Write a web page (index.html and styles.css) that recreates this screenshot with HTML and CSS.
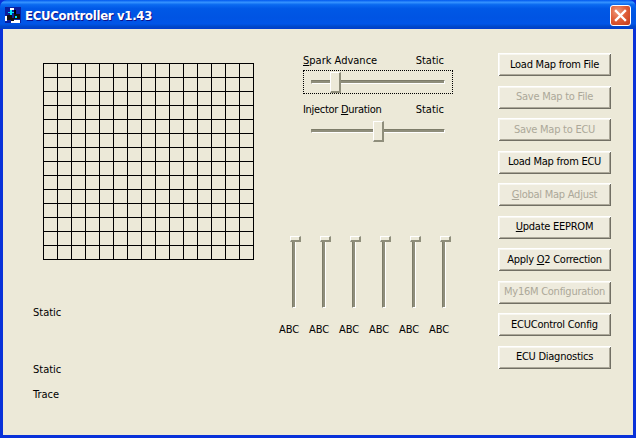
FILE: index.html
```html
<!DOCTYPE html>
<html lang="en">
<head>
<meta charset="utf-8">
<title>ECUController v1.43</title>
<link rel="stylesheet" href="styles.css">
</head>
<body>
<div class="window">
  <header class="titlebar">
    <svg class="app-icon" width="16" height="16" viewBox="0 0 16 16" shape-rendering="crispEdges">
      <rect width="16" height="16" fill="#0a1f9f"/>
      <rect x="5" y="1" width="4" height="2" fill="#ffffff"/>
      <rect x="5" y="3" width="2" height="6" fill="#00e5ff"/>
      <rect x="3" y="5" width="6" height="1" fill="#00e5ff"/>
      <rect x="9" y="3" width="2" height="4" fill="#000000"/>
      <rect x="2" y="8" width="5" height="5" fill="#111111"/>
      <rect x="0" y="9" width="2" height="5" fill="#ffffff"/>
      <rect x="9" y="7" width="6" height="5" fill="#111111"/>
      <rect x="10" y="9" width="2" height="2" fill="#00e5ff"/>
      <rect x="6" y="13" width="9" height="3" fill="#ffffff"/>
      <rect x="6" y="11" width="3" height="3" fill="#111111"/>
    </svg>
    <span class="title-text">ECUController v1.43</span>
    <button class="close" aria-label="Close">
      <svg width="13" height="13" viewBox="0 0 13 13"><path d="M2 2 L11 11 M11 2 L2 11" stroke="#fff" stroke-width="2.4" stroke-linecap="square"/></svg>
    </button>
  </header>
  <main class="client">
    <section class="left">
      <div class="map-grid"></div>
      <div class="lbl lbl-a">Static</div>
      <div class="lbl lbl-b">Static</div>
      <div class="lbl lbl-c">Trace</div>
    </section>
    <section class="middle">
      <div class="slider-head"><span><u>S</u>park Advance</span><span>Static</span></div>
      <div class="hslider focused"><div class="track"></div><div class="thumb thumb-spark"></div></div>
      <div class="slider-head head-two"><span class="tight">Injector <u>D</u>uration</span><span>Static</span></div>
      <div class="hslider"><div class="track"></div><div class="thumb thumb-inj"></div></div>
      <div class="vsliders">
        <div class="vcol"><div class="vtrack"><div class="vthumb"></div></div><span>ABC</span></div>
        <div class="vcol"><div class="vtrack"><div class="vthumb"></div></div><span>ABC</span></div>
        <div class="vcol"><div class="vtrack"><div class="vthumb"></div></div><span>ABC</span></div>
        <div class="vcol"><div class="vtrack"><div class="vthumb"></div></div><span>ABC</span></div>
        <div class="vcol"><div class="vtrack"><div class="vthumb"></div></div><span>ABC</span></div>
        <div class="vcol"><div class="vtrack"><div class="vthumb"></div></div><span>ABC</span></div>
      </div>
    </section>
    <section class="buttons">
      <button class="btn">Load Map from File</button>
      <button class="btn" disabled>Save Map to File</button>
      <button class="btn" disabled>Save Map to ECU</button>
      <button class="btn">Load Map from ECU</button>
      <button class="btn" disabled><u>G</u>lobal Map Adjust</button>
      <button class="btn"><u>U</u>pdate EEPROM</button>
      <button class="btn">Apply <u>O</u>2 Correction</button>
      <button class="btn" disabled>My16M Configuration</button>
      <button class="btn">ECUControl Config</button>
      <button class="btn">ECU Diagnostics</button>
    </section>
  </main>
</div>
</body>
</html>
```
FILE: styles.css
```css
* { box-sizing: border-box; }
html, body { margin: 0; padding: 0; }
body {
  width: 636px;
  height: 438px;
  overflow: hidden;
  background: #0831d9;
  font-family: "DejaVu Sans Condensed", "Liberation Sans", sans-serif;
  font-size: 11px;
  color: #000;
}
.window {
  width: 636px;
  height: 438px;
  display: flex;
  flex-direction: column;
  background: #0831d9;
  border-radius: 7px 7px 0 0;
  overflow: hidden;
}
.titlebar {
  height: 29px;
  flex: none;
  display: flex;
  align-items: center;
  padding: 1px 5px 0 5px;
  background: linear-gradient(180deg, #0058ee 0%, #3593ff 8%, #0a6af0 16%, #0058e6 30%, #0054e3 60%, #0055e8 82%, #0047c8 92%, #003dd0 100%);
}
.app-icon { flex: none; }
.title-text {
  margin-left: 4px;
  flex: 1;
  color: #fff;
  font-family: "DejaVu Sans Condensed", "DejaVu Sans", sans-serif;
  font-weight: bold;
  font-size: 13px;
  letter-spacing: -0.3px;
  text-shadow: 1px 1px 0 #0f1089;
}
.close {
  width: 21px;
  height: 21px;
  padding: 0;
  display: flex;
  align-items: center;
  justify-content: center;
  border: 1px solid #fff;
  border-radius: 3px;
  background: radial-gradient(circle at 35% 30%, #ef9a7c 0%, #e0603a 45%, #c33a18 100%);
}
.client {
  flex: 1;
  margin: 0 3px 3px 3px;
  background: #ece9d8;
  display: flex;
  min-height: 0;
}
.left {
  width: 268px;
  flex: none;
  padding: 34px 0 0 40px;
  display: flex;
  flex-direction: column;
}
.map-grid {
  width: 211px;
  height: 197px;
  background-color: #ece9d8;
  background-image:
    repeating-linear-gradient(90deg, #000 0 1px, transparent 1px 14px),
    repeating-linear-gradient(180deg, #000 0 1px, transparent 1px 14px);
}
.lbl { margin-left: -10px; line-height: 14px; }
.lbl-a { margin-top: 46px; }
.lbl-b { margin-top: 43px; }
.lbl-c { margin-top: 11px; }
.middle {
  width: 227px;
  flex: none;
  padding: 25px 0 0 32px;
  display: flex;
  flex-direction: column;
}
.slider-head {
  width: 141px;
  display: flex;
  justify-content: space-between;
  line-height: 14px;
  white-space: nowrap;
}
.head-two { margin-top: 9px; }
.tight { letter-spacing: -0.3px; }
.hslider {
  position: relative;
  width: 150px;
  height: 24px;
  margin-top: 2px;
  display: flex;
  align-items: center;
  padding-left: 7px;
  border: 1px dotted transparent;
}
.hslider.focused { border-color: #000; }
.track {
  width: 134px;
  height: 4px;
  background: #8f8e7b;
  border-top: 1px solid #7d7c69;
  border-left: 1px solid #8f8e7b;
  border-right: 1px solid #fff;
  border-bottom: 1px solid #fff;
}
.thumb {
  position: absolute;
  top: 1px;
  width: 11px;
  height: 21px;
  background: #ece9d8;
  border-top: 1px solid #fff;
  border-left: 1px solid #fff;
  border-right: 2px solid #8f8e7b;
  border-bottom: 2px solid #8f8e7b;
}
.thumb-spark { left: 26px; }
.thumb-inj { left: 69px; }
.vsliders {
  display: flex;
  margin-top: 93px;
  margin-left: -24px;
}
.vcol {
  width: 30px;
  display: flex;
  flex-direction: column;
  align-items: center;
}
.vcol span {
  align-self: flex-start;
  margin-top: 15px;
  line-height: 14px;
}
.vtrack {
  position: relative;
  width: 4px;
  height: 66px;
  margin-top: 6px;
  background: #8f8e7b;
  border-left: 1px solid #7d7c69;
  border-right: 1px solid #fff;
  border-bottom: 1px solid #fff;
}
.vthumb {
  position: absolute;
  top: -6px;
  left: -3px;
  width: 11px;
  height: 6px;
  background: #ece9d8;
  border-top: 1px solid #fff;
  border-left: 1px solid #fff;
  border-right: 2px solid #8f8e7b;
  border-bottom: 2px solid #8f8e7b;
}
.buttons {
  flex: none;
  width: 113px;
  padding-top: 24px;
  display: flex;
  flex-direction: column;
  gap: 9.5px;
}
.btn {
  width: 113px;
  height: 23px;
  flex: none;
  padding: 0 0 1px;
  font: inherit;
  letter-spacing: -0.25px;
  color: #000;
  white-space: nowrap;
  background: #eeebdd;
  border: 0;
  box-shadow:
    inset 1px 1px 0 #fff,
    inset -1px -1px 0 #716f64,
    inset 2px 2px 0 #f8f7f0,
    inset -2px -2px 0 #aca899;
}
.btn:disabled { color: #aca899; }
```
